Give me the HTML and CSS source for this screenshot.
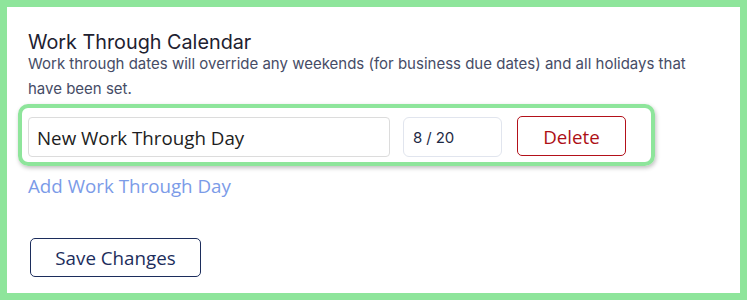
FILE: index.html
```html
<!DOCTYPE html>
<html lang="en">
<head>
    <meta charset="UTF-8" />
    <title>Work Through Calendar</title>
    <link rel="stylesheet" href="styles.css">
</head>
<body>
<div class="frame">
    <h3>Work Through Calendar</h3>
    <p class="hint">Work through dates will override any weekends (for business due dates) and all holidays that have been set.</p>

    <div class="day-row">
        <input type="text" class="day-name" value="New Work Through Day" />
        <input type="text" class="day-date" value="8 / 20" />
        <button type="button" class="delete-btn">Delete</button>
    </div>

    <a class="add-link" href="#">Add Work Through Day</a>

    <button type="button" class="save-btn">Save Changes</button>
</div>
</body>
</html>
```

FILE: styles.css
```css
body {
    margin: 0;
    background-color: #fff;
}
.frame {
    box-sizing: border-box;
    width: 747px;
    height: 300px;
    border: 7px solid #8ee59b;
    padding: 25px 0 0 21px;
    background-color: #fff;
}
h3 {
    margin: 0;
    font-family: Inter, sans-serif;
    font-weight: 400;
    font-size: 19.8px;
    line-height: 20px;
    color: #1e2130;
}
.hint {
    margin: 0;
    width: 690px;
    font-family: Inter, sans-serif;
    font-size: 15px;
    line-height: 24.5px;
    color: #464c66;
}
.day-row {
    display: flex;
    align-items: flex-start;
    box-sizing: border-box;
    width: 637px;
    margin: 3px 0 0 -10px;
    padding: 9px 6px 5px;
    border: 4px solid #8ee59b;
    border-radius: 10px;
    box-shadow: 1px 2px 4px rgba(0, 0, 0, 0.25);
}
input[type="text"] {
    box-sizing: border-box;
    height: 40px;
    margin: 0;
    border-radius: 4px;
    background-color: #fff;
    outline: none;
}
.day-name {
    width: 362px;
    padding: 0 8px;
    border: 1px solid #dcdcdc;
    font-family: "Open Sans", sans-serif;
    font-size: 18.75px;
    color: #1d1d22;
}
.day-date {
    width: 99px;
    margin-left: 13px !important;
    padding: 0 9px;
    border: 1px solid #e1e5ee;
    border-radius: 6px !important;
    font-family: Inter, sans-serif;
    font-size: 15px;
    letter-spacing: -0.1px;
    color: #1e2a44;
}
.delete-btn {
    box-sizing: border-box;
    width: 109px;
    height: 40px;
    margin-left: 15px;
    margin-top: -1px;
    border: 1px solid #b3111a;
    border-radius: 5px;
    background-color: #fff;
    font-family: "Open Sans", sans-serif;
    font-size: 18.75px;
    color: #ad0f16;
    cursor: pointer;
}
.add-link {
    display: block;
    margin-top: 8px;
    font-family: "Open Sans", sans-serif;
    font-size: 18.75px;
    line-height: 24px;
    color: #7b9be8;
    text-decoration: none;
}
.save-btn {
    box-sizing: border-box;
    width: 171px;
    height: 39px;
    margin: 40px 0 0 2px;
    border: 1px solid #1c2d5c;
    border-radius: 5px;
    background-color: #fff;
    font-family: "Open Sans", sans-serif;
    font-size: 18.75px;
    color: #1c2d5c;
    cursor: pointer;
}
```
